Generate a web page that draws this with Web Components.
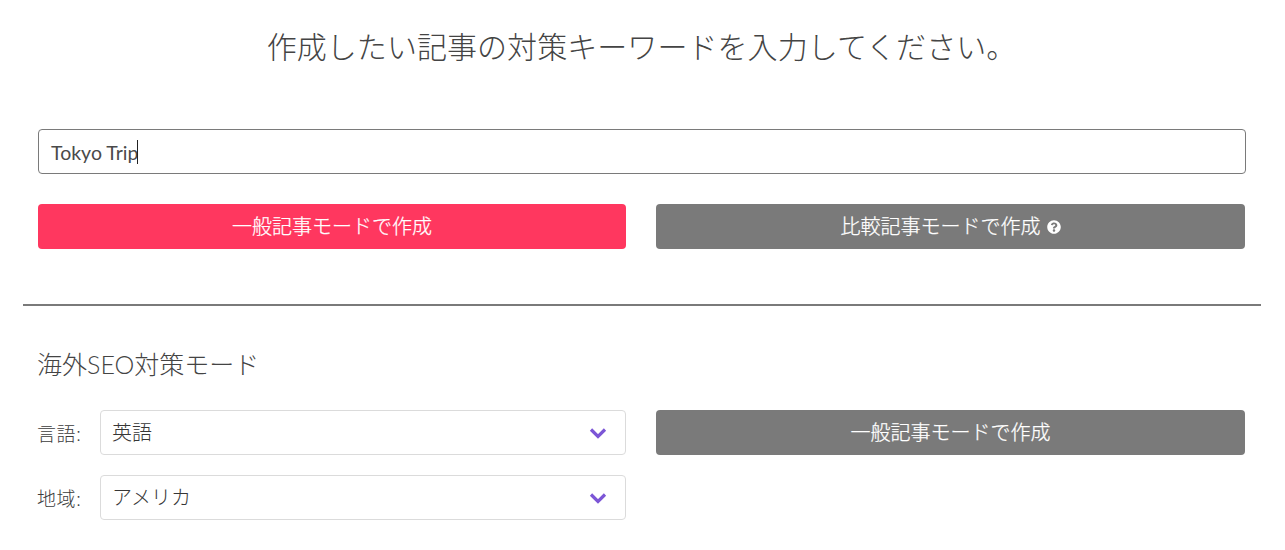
<!DOCTYPE html>
<html lang="ja"><head><meta charset="utf-8"><title>記事作成</title>
<style>
html,body{margin:0;background:#fff}
body{font-family:Lato,"Noto Sans CJK JP",sans-serif;color:#4a4a4a;font-size:18px}
</style></head><body>
<kw-page>
  <kw-title>作成したい記事の対策キーワードを入力してください。</kw-title>
  <kw-input>Tokyo Trip</kw-input>
  <kw-row>
    <kw-button color="#ff375f">一般記事モードで作成</kw-button>
    <kw-button color="#7a7a7a" help>比較記事モードで作成</kw-button>
  </kw-row>
  <kw-rule></kw-rule>
  <kw-heading>海外SEO対策モード</kw-heading>
  <kw-row style="margin-top:29px">
    <kw-stack>
      <kw-select label="言語:">英語</kw-select>
      <kw-select label="地域:">アメリカ</kw-select>
    </kw-stack>
    <kw-button color="#7a7a7a">一般記事モードで作成</kw-button>
  </kw-row>
</kw-page>
<script>
function def(name, css, html){
  customElements.define(name, class extends HTMLElement{
    connectedCallback(){
      if(this.shadowRoot) return;
      const r=this.attachShadow({mode:'open'});
      r.innerHTML='<style>'+css+'</style>'+(typeof html==='function'?html(this):html);
    }
  });
}
def('kw-page',':host{display:block;padding:0 24px 0 23px;box-sizing:border-box;width:1285px}','<slot></slot>');
def('kw-title',':host{display:block;text-align:center;font-size:30px;line-height:45px;padding-top:24px;height:129px;box-sizing:border-box;color:#444;font-weight:300;letter-spacing:.06px;margin-left:-1px}','<slot></slot>');
def('kw-input',`:host{display:flex;align-items:center;margin:0 15px;height:45px;box-sizing:border-box;border:1px solid #7a7a7a;border-radius:4px;padding:1px 12px 0;font-size:19.5px;font-weight:400;color:#4a4a4a}
.caret{display:inline-block;width:1px;height:24px;background:#222;margin-left:-1px}`,'<slot></slot><span class="caret"></span>');
def('kw-row',`:host{display:grid;grid-template-columns:588px 589px;column-gap:30px;margin:30px 15px 0;align-items:start}`,'<slot></slot>');
def('kw-stack',':host{display:flex;flex-direction:column;gap:20px}','<slot></slot>');
def('kw-button',`:host{display:flex;align-items:center;justify-content:center;gap:6px;height:45px;box-sizing:border-box;padding-bottom:2px;border-radius:4px;color:#fff;font-size:20px;font-weight:300;-webkit-text-stroke:.25px #fff;background:var(--c)}
svg{width:14px;height:14px;display:block;margin-top:3px}`,
 h=>{h.style.setProperty('--c',h.getAttribute('color'));
  return '<slot></slot>'+(h.hasAttribute('help')?'<svg viewBox="0 0 512 512"><path fill="#fff" d="M504 256c0 137-111 248-248 248S8 393 8 256 119 8 256 8s248 111 248 248zM262.700 90c-54.500 0-89.300 23-116.500 63.800-3.500 5.300-2.400 12.400 2.700 16.300l34.700 26.300c5.200 3.900 12.600 3 16.700-2.100 17.900-22.700 30.100-35.800 57.300-35.800 20.400 0 45.700 13.100 45.700 32.900 0 15-12.400 22.700-32.500 34-23.500 13.200-54.600 29.600-54.600 70.600V300c0 6.600 5.400 12 12 12h56c6.600 0 12-5.400 12-12v-1.300c0-28.400 83-29.600 83-106.700 0-58-60.200-102-116.500-102zM256 338c-25.400 0-46 20.600-46 46 0 25.400 20.600 46 46 46s46-20.600 46-46c0-25.400-20.600-46-46-46z"/></svg>':'');});
def('kw-rule',':host{display:block;height:2px;background:#7a7a7a;margin-top:55px}','');
def('kw-heading',':host{display:block;margin:42px 15px 0 14px;font-size:25px;line-height:33px;color:#444;font-weight:300}','<slot></slot>');
def('kw-select',`:host{display:grid;grid-template-columns:62px 1fr;align-items:center;font-size:19px;font-weight:300;color:#3c3c3c}
.lab{margin-left:-1px;letter-spacing:.6px}
.box{display:flex;align-items:center;justify-content:space-between;height:45px;box-sizing:border-box;border:1px solid #dbdbdb;border-radius:4px;padding:0 18px 2px 11px;color:#363636;font-size:20px}
svg{width:18px;height:12px;display:block;margin-top:2px}`,
 h=>'<span class="lab">'+h.getAttribute('label')+'</span><div class="box"><slot></slot><svg viewBox="0 0 18 12"><path d="M2 2.500l7 7 7-7" fill="none" stroke="#7c56d6" stroke-width="3.200"/></svg></div>');
</script>
</body></html>
